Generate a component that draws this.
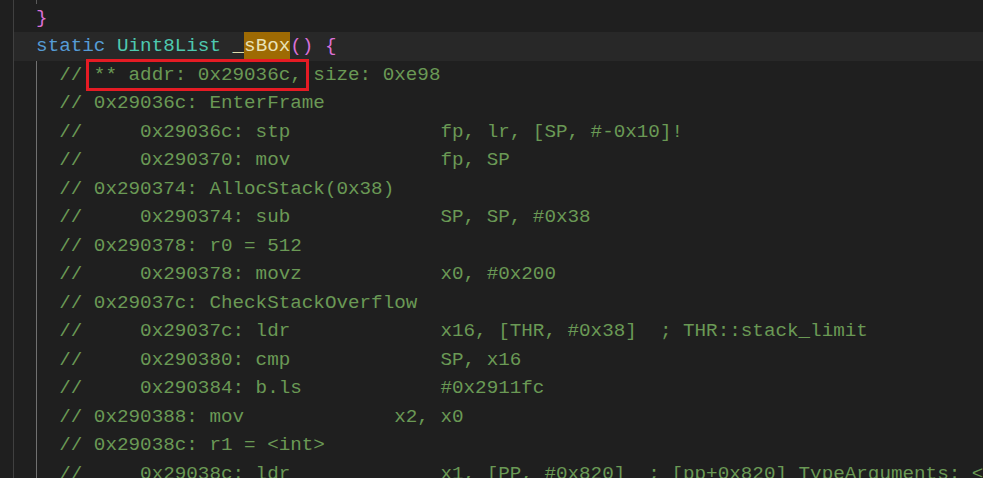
const COMMENT = "text-[#6a9955]";

const lines = [
  { indent: 2, parts: [["}", "text-[#da70d6]"]] },
  {
    indent: 2,
    active: true,
    parts: [
      ["static", "text-[#569cd6]"],
      [" "],
      ["Uint8List", "text-[#4ec9b0]"],
      [" "],
      ["_", "text-[#dcdcaa]"],
      ["sBox", "text-[#e8e2b8] bg-[#9e6a03] inline-block h-[28.5px] align-top"],
      ["()", "text-[#da70d6]"],
      [" "],
      ["{", "text-[#da70d6]"],
    ],
  },
  { indent: 4, box: true, parts: [["// ** addr: 0x29036c, size: 0xe98", COMMENT]] },
  { indent: 4, parts: [["// 0x29036c: EnterFrame", COMMENT]] },
  { indent: 4, parts: [["//     0x29036c: stp             fp, lr, [SP, #-0x10]!", COMMENT]] },
  { indent: 4, parts: [["//     0x290370: mov             fp, SP", COMMENT]] },
  { indent: 4, parts: [["// 0x290374: AllocStack(0x38)", COMMENT]] },
  { indent: 4, parts: [["//     0x290374: sub             SP, SP, #0x38", COMMENT]] },
  { indent: 4, parts: [["// 0x290378: r0 = 512", COMMENT]] },
  { indent: 4, parts: [["//     0x290378: movz            x0, #0x200", COMMENT]] },
  { indent: 4, parts: [["// 0x29037c: CheckStackOverflow", COMMENT]] },
  { indent: 4, parts: [["//     0x29037c: ldr             x16, [THR, #0x38]  ; THR::stack_limit", COMMENT]] },
  { indent: 4, parts: [["//     0x290380: cmp             SP, x16", COMMENT]] },
  { indent: 4, parts: [["//     0x290384: b.ls            #0x2911fc", COMMENT]] },
  { indent: 4, parts: [["// 0x290388: mov             x2, x0", COMMENT]] },
  { indent: 4, parts: [["// 0x29038c: r1 = <int>", COMMENT]] },
  {
    indent: 4,
    parts: [["//     0x29038c: ldr             x1, [PP, #0x820]  ; [pp+0x820] TypeArguments: <int>", COMMENT]],
  },
];

function Guides({ indent }) {
  return (
    <>
      <span className="inline-block h-[28.5px] align-top shadow-[inset_1px_0_0_#404040]">{"  "}</span>
      {indent === 4 && (
        <span className="inline-block h-[28.5px] align-top shadow-[inset_1px_0_0_#707070]">{"  "}</span>
      )}
    </>
  );
}

function CodeLine({ line }) {
  return (
    <div
      className={`relative h-[28.5px] whitespace-pre ${line.active ? "bg-[#282828]" : ""}`}
    >
      <Guides indent={line.indent} />
      {line.parts.map(([text, cls], i) => (
        <span key={i} className={cls || "text-[#cccccc]"}>
          {text}
        </span>
      ))}
      {/* red annotation box drawn over the addr part */}
      {line.box && (
        <div className="absolute left-[73px] top-[-1.5px] w-[223px] h-[32px] border-[3px] border-[#e51b24]" />
      )}
    </div>
  );
}

export default function App() {
  return (
    <div className="w-[983px] h-[478px] overflow-hidden bg-[#1f1f1f]">
      <div
        className="text-[19.25px] leading-[28.5px]"
        style={{ fontFamily: '"Liberation Mono", "DejaVu Sans Mono", monospace' }}
      >
        <div className="-mt-[25px] h-[28.5px] pl-[13px] whitespace-pre">
          <span className="inline-block h-[28.5px] align-top shadow-[inset_1px_0_0_#404040]">{"  "}</span>
          <span className="inline-block h-[28.5px] align-top shadow-[inset_1px_0_0_#5a5a5a]">{"  "}</span>
        </div>
        <div className="pl-[13px]">
          {lines.map((line, i) => (
            <CodeLine key={i} line={line} />
          ))}
        </div>
      </div>
    </div>
  );
}
